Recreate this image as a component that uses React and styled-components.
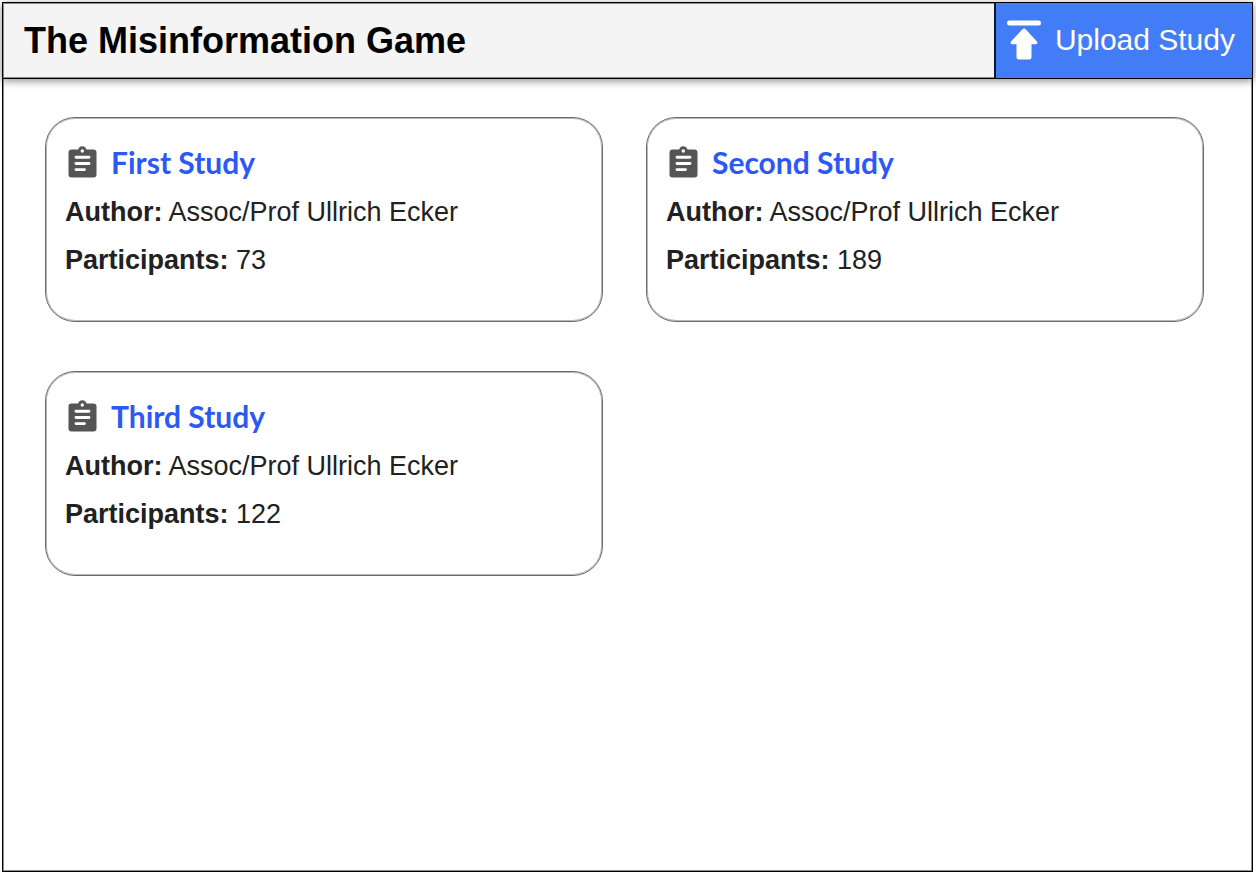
import React from "react";
import styled, { createGlobalStyle } from "styled-components";

const GlobalStyle = createGlobalStyle`
  *, *::before, *::after { box-sizing: border-box; }
  body {
    margin: 0;
    background: #fff;
    color: #212121;
    font-family: "Liberation Sans", Arial, Helvetica, sans-serif;
  }
`;

const Page = styled.div`
  display: flex;
  min-height: 100vh;
  padding: 2px 3px 2px 2px;
`;

const Frame = styled.div`
  flex: 1;
  display: flex;
  flex-direction: column;
  border: 1px solid #000;
  box-shadow: inset 0 0 0 1px #8c8c8c;
`;

const Header = styled.header`
  display: flex;
  height: 77px;
  margin: -1px;
  background: #f4f4f4;
  border: 1px solid #000;
  box-shadow: inset 0 0 0 1px #8c8c8c, 0 2px 8px rgba(0, 0, 0, 0.45);
`;

const Title = styled.h1`
  flex: 1;
  margin: 0;
  padding-left: 21px;
  color: #000;
  font-size: 36px;
  line-height: 76px;
`;

const UploadButton = styled.button`
  display: flex;
  align-items: center;
  gap: 14px;
  margin: 0;
  padding: 0 17px 2px 11px;
  border: 0;
  border-left: 2px solid #0b1530;
  background: #437cf7;
  color: #fff;
  font-family: inherit;
  font-size: 30px;
  line-height: 34px;
  cursor: pointer;
`;

const Studies = styled.main`
  display: grid;
  grid-template-columns: 1fr 1fr;
  gap: 49px 43px;
  padding: 39px 48px 39px 42px;
`;

const Card = styled.article`
  min-height: 205px;
  padding: 20px 19px;
  border: 1px solid #6b6b6b;
  border-radius: 30px;
  box-shadow: inset 0 0 0 1px #b8b8b8;
`;

const CardHeading = styled.h2`
  display: flex;
  align-items: center;
  gap: 14px;
  height: 48px;
  margin: 0 0 2px;
  padding-left: 3px;
  font-family: Lato, sans-serif;
  font-size: 30px;
  line-height: 48px;
`;

const StudyLink = styled.a`
  color: #2b59f5;
  text-decoration: none;
`;

const Detail = styled.p`
  margin: 0;
  font-size: 27px;
  line-height: 48px;
`;

function UploadIcon() {
  return (
    <svg width="34" height="40" viewBox="0 0 34 40" fill="#fff" aria-hidden="true">
      <rect x="0" y="0.5" width="34" height="5" rx="2.5" />
      <path d="M15.4 9.3q1.6-1.400 3.200 0L30 21.600q1.400 2-1 2.700H24.500v12.700q0 2.500-2.500 2.500h-10q-2.500 0-2.500-2.500V24.300H5q-2.400-.7-1-2.700Z" />
    </svg>
  );
}

function ClipboardIcon() {
  return (
    <svg width="29" height="32" viewBox="0 0 29 32" aria-hidden="true">
      <rect x="0.500" y="3.500" width="28" height="28" rx="3" fill="#555" />
      <circle cx="14.300" cy="4.500" r="4.300" fill="#555" />
      <circle cx="14.300" cy="5" r="1.700" fill="#fff" />
      <path d="M8 11.300h13M8 17.500h13M8 23.600h8.500" stroke="#fff" strokeWidth="2.900" strokeLinecap="round" />
    </svg>
  );
}

const studies = [
  { name: "First Study", author: "Assoc/Prof Ullrich Ecker", participants: 73 },
  { name: "Second Study", author: "Assoc/Prof Ullrich Ecker", participants: 189 },
  { name: "Third Study", author: "Assoc/Prof Ullrich Ecker", participants: 122 },
];

export default function App() {
  return (
    <>
      <GlobalStyle />
      <Page>
        <Frame>
          <Header>
            <Title>The Misinformation Game</Title>
            <UploadButton type="button">
              <UploadIcon />
              Upload Study
            </UploadButton>
          </Header>
          <Studies>
            {studies.map((study) => (
              <Card key={study.name}>
                <CardHeading>
                  <ClipboardIcon />
                  <StudyLink href="#">{study.name}</StudyLink>
                </CardHeading>
                <Detail>
                  <strong>Author:</strong> {study.author}
                </Detail>
                <Detail>
                  <strong>Participants:</strong> {study.participants}
                </Detail>
              </Card>
            ))}
          </Studies>
        </Frame>
      </Page>
    </>
  );
}
